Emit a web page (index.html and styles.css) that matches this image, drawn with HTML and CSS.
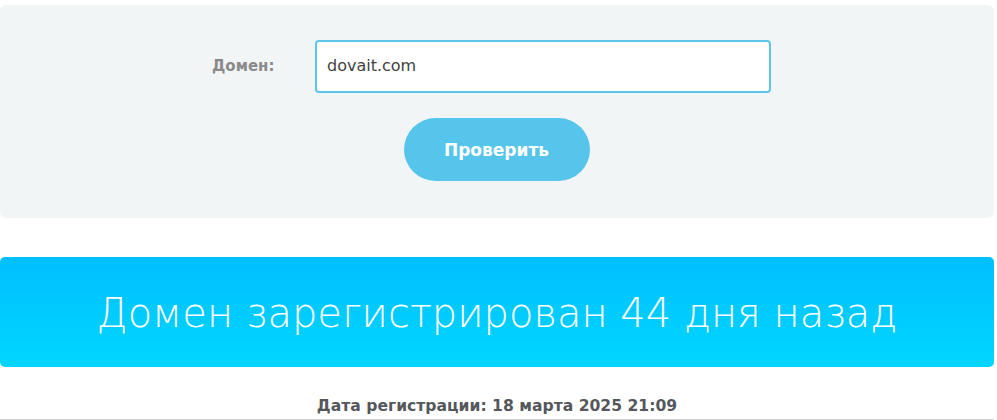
FILE: index.html
```html
<!DOCTYPE html>
<html lang="ru">
<head>
<meta charset="utf-8">
<link rel="stylesheet" href="styles.css">
</head>
<body>
<div class="page">
  <form class="check-panel">
    <div class="field-row">
      <label class="field-label" for="domain">Домен:</label>
      <input class="field-input" id="domain" type="text" value="dovait.com">
    </div>
    <button class="check-btn" type="button">Проверить</button>
  </form>
  <div class="result-banner">Домен зарегистрирован 44 дня назад</div>
  <div class="reg-date">Дата регистрации: 18 марта 2025 21:09</div>
</div>
</body>
</html>
```
FILE: styles.css
```css
* { box-sizing: border-box; }
html, body { margin: 0; padding: 0; background: #fff; }
body { font-family: "DejaVu Sans", "Open Sans", sans-serif; }
.page {
  width: 994px;
  padding-top: 5px;
}
.check-panel {
  background: #f2f5f6;
  border-radius: 6px;
  height: 213px;
  padding-top: 35px;
  display: flex;
  flex-direction: column;
  align-items: center;
}
.field-row {
  display: flex;
  align-items: center;
  width: 100%;
}
.field-label {
  width: 315px;
  padding-left: 212px;
  padding-bottom: 2px;
  font-family: "DejaVu Sans", sans-serif;
  font-size: 15px;
  font-weight: bold;
  color: #8a8a8a;
}
.field-input {
  width: 456px;
  height: 53px;
  border: 2px solid #5bc6ea;
  border-radius: 4px;
  background: #fff;
  padding: 0 0 2px 10px;
  font-family: "DejaVu Sans", sans-serif;
  font-size: 16px;
  color: #3f3f3f;
  outline: none;
}
.check-btn {
  margin-top: 25px;
  margin-left: -1px;
  width: 186px;
  height: 63px;
  border: none;
  border-radius: 32px;
  background: #56c5ec;
  color: #fff;
  font-family: "DejaVu Sans", sans-serif;
  font-weight: bold;
  font-size: 17px;
  cursor: pointer;
}
.result-banner {
  margin-top: 39px;
  height: 110px;
  border-radius: 5px;
  background: linear-gradient(to bottom, #00bfff, #00d6ff);
  color: #fff;
  display: flex;
  align-items: center;
  justify-content: center;
  font-family: "DejaVu Sans", sans-serif;
  font-weight: 200;
  font-size: 40px;
  padding-top: 2px;
}
.reg-date {
  text-align: center;
  padding: 30px 0 0 0;
  height: 53px;
  font-family: "DejaVu Sans", sans-serif;
  font-weight: bold;
  font-size: 15.6px;
  color: #55575c;
  border-bottom: 1px solid #cfcfcf;
}
```
